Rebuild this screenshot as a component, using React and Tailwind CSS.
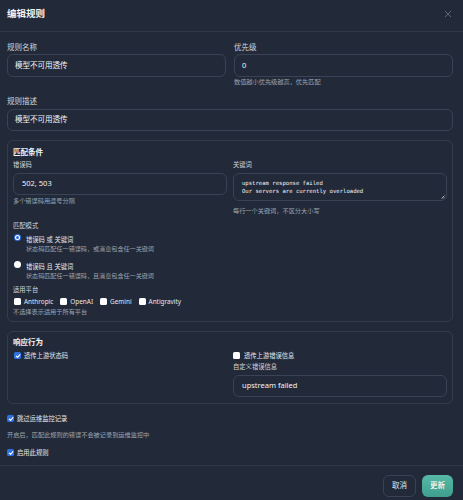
import React from "react";

const Check = ({ checked }) =>
  checked ? (
    <span className="w-[7px] h-[7px] rounded-[1.5px] bg-[#2f6fdf] flex items-center justify-center shrink-0">
      <svg width="6" height="6" viewBox="0 0 10 10">
        <path d="M2 5.2 L4.2 7.4 L8.2 2.6" stroke="white" strokeWidth="1.8" fill="none" strokeLinecap="round" strokeLinejoin="round" />
      </svg>
    </span>
  ) : (
    <span className="w-[7px] h-[7px] rounded-[1.5px] bg-white shrink-0" />
  );

const Radio = ({ checked }) =>
  checked ? (
    <span className="w-[7px] h-[7px] rounded-full bg-[#2f6fdf] flex items-center justify-center shrink-0">
      <span className="w-[5px] h-[5px] rounded-full bg-white flex items-center justify-center">
        <span className="w-[3px] h-[3px] rounded-full bg-[#2f6fdf]" />
      </span>
    </span>
  ) : (
    <span className="w-[7px] h-[7px] rounded-full bg-white shrink-0" />
  );

export default function App() {
  return (
    <div className="w-[463px] h-[500px] overflow-hidden bg-[#222a3a] text-[#e5e7eb] font-['Noto_Sans','Noto_Sans_CJK_SC',sans-serif]">
      {/* header */}
      <div className="flex items-start justify-between pl-[7px] pr-[11px] pt-[8px] pb-[11px] border-b border-[#2f3848]">
        <div className="text-[9.5px] leading-[12px] font-bold text-[#f3f4f6]">编辑规则</div>
        <svg width="8" height="8" viewBox="0 0 10 10" className="mt-[2px]">
          <path d="M1.5 1.5 L8.5 8.5 M8.5 1.5 L1.5 8.5" stroke="#6b7280" strokeWidth="1.1" strokeLinecap="round" />
        </svg>
      </div>

      {/* body */}
      <div className="pl-[7px] pr-[10px] pt-[10px] pb-[8px]">
        <div className="grid grid-cols-2 gap-x-[8px]">
          <div>
            <div className="text-[7.5px] leading-[10px] text-[#d1d5db]">规则名称</div>
            <div className="mt-[2px] h-[23px] rounded-[6px] border border-[#394355] flex items-center px-[7px] text-[7.5px] text-[#f3f4f6]">模型不可用透传</div>
          </div>
          <div>
            <div className="text-[7.5px] leading-[10px] text-[#d1d5db]">优先级</div>
            <div className="mt-[2px] h-[23px] rounded-[6px] border border-[#394355] flex items-center px-[7px] text-[7.5px] text-[#f3f4f6]">0</div>
            <div className="mt-[1px] text-[6.2px] leading-[8px] text-[#9ca3af]">数值越小优先级越高，优先匹配</div>
          </div>
        </div>

        <div className="mt-[10px] text-[7.5px] leading-[10px] text-[#d1d5db]">规则描述</div>
        <div className="mt-[3px] h-[22px] rounded-[6px] border border-[#394355] flex items-center px-[7px] text-[7.5px] text-[#f3f4f6]">模型不可用透传</div>

        {/* match conditions */}
        <div className="mt-[9px] rounded-[6px] border border-[#343d4e] px-[5px] pt-[6px] pb-[5px]">
          <div className="text-[7.5px] leading-[10px] font-bold text-[#f3f4f6]">匹配条件</div>
          <div className="mt-[4px] grid grid-cols-2 gap-x-[6px]">
            <div>
              <div className="text-[6.3px] leading-[8px] text-[#d1d5db]">错误码</div>
              <div className="mt-[4px] h-[22px] rounded-[6px] border border-[#394355] flex items-center px-[8px] text-[7.5px] text-[#f3f4f6]">502, 503</div>
              <div className="mt-[2px] text-[6.2px] leading-[8px] text-[#9ca3af]">多个错误码用逗号分隔</div>
            </div>
            <div>
              <div className="text-[6.3px] leading-[8px] text-[#d1d5db]">关键词</div>
              <div className="relative mt-[4px] h-[28px] rounded-[6px] border border-[#394355] px-[8px] pt-[5px] font-['DejaVu_Sans_Mono',monospace] text-[5.6px] leading-[8px] text-[#f3f4f6] whitespace-pre">
                <div>upstream response failed</div>
                <div>Our servers are currently overloaded</div>
                <svg width="4" height="4" viewBox="0 0 4 4" className="absolute right-[1px] bottom-[1px]">
                  <path d="M0.5 3.5 L3.5 0.5 M2 3.5 L3.5 2" stroke="#d1d5db" strokeWidth="0.7" />
                </svg>
              </div>
              <div className="mt-[6px] text-[6.2px] leading-[8px] text-[#9ca3af]">每行一个关键词，不区分大小写</div>
            </div>
          </div>

          <div className="mt-[7px] text-[6.3px] leading-[8px] text-[#d1d5db]">匹配模式</div>
          <div className="mt-[4px] flex items-start gap-[5px] pl-[1px]">
            <Radio checked />
            <div className="pt-[1px]">
              <div className="text-[6.3px] leading-[9px] text-[#e5e7eb]">错误码 或 关键词</div>
              <div className="text-[6.1px] leading-[9px] text-[#9ca3af]">状态码匹配任一错误码，或消息包含任一关键词</div>
            </div>
          </div>
          <div className="mt-[8px] flex items-start gap-[5px] pl-[1px]">
            <Radio />
            <div className="pt-[1px]">
              <div className="text-[6.3px] leading-[9px] text-[#e5e7eb]">错误码 且 关键词</div>
              <div className="text-[6.1px] leading-[9px] text-[#9ca3af]">状态码匹配任一错误码，且消息包含任一关键词</div>
            </div>
          </div>

          <div className="mt-[6px] text-[6.3px] leading-[8px] text-[#d1d5db]">适用平台</div>
          <div className="mt-[3px] flex items-center gap-[7px] pl-[1px]">
            {["Anthropic", "OpenAI", "Gemini", "Antigravity"].map((p) => (
              <div key={p} className="flex items-center gap-[3px]">
                <Check />
                <span className="text-[6.4px] leading-[9px] text-[#e5e7eb]">{p}</span>
              </div>
            ))}
          </div>
          <div className="mt-[2px] text-[6.2px] leading-[8px] text-[#9ca3af]">不选择表示适用于所有平台</div>
        </div>

        {/* response behaviour */}
        <div className="mt-[9px] rounded-[6px] border border-[#343d4e] px-[5px] pt-[5px] pb-[6px]">
          <div className="text-[7.5px] leading-[10px] font-bold text-[#f3f4f6]">响应行为</div>
          <div className="mt-[4px] grid grid-cols-2 gap-x-[6px]">
            <div className="flex items-center gap-[3px] h-[9px] pl-[1px] self-start">
              <Check checked />
              <span className="text-[6.3px] leading-[9px] text-[#e5e7eb]">透传上游状态码</span>
            </div>
            <div>
              <div className="flex items-center gap-[4px] h-[9px]">
                <Check />
                <span className="text-[6.3px] leading-[9px] text-[#e5e7eb]">透传上游错误信息</span>
              </div>
              <div className="mt-[3px] text-[6.3px] leading-[8px] text-[#d1d5db]">自定义错误信息</div>
              <div className="mt-[4px] h-[22px] rounded-[6px] border border-[#394355] flex items-center px-[8px] text-[7.5px] text-[#f3f4f6]">upstream failed</div>
            </div>
          </div>
        </div>

        <div className="mt-[10px] flex items-center gap-[3px] h-[9px]">
          <Check checked />
          <span className="text-[6.3px] leading-[9px] text-[#e5e7eb]">跳过运维监控记录</span>
        </div>
        <div className="mt-[8px] text-[6.2px] leading-[8px] text-[#9ca3af]">开启后，匹配此规则的错误不会被记录到运维监控中</div>
        <div className="mt-[9px] flex items-center gap-[3px] h-[9px]">
          <Check checked />
          <span className="text-[6.3px] leading-[9px] text-[#e5e7eb]">启用此规则</span>
        </div>
      </div>

      {/* footer */}
      <div className="border-t border-[#2f3848] pt-[9px] pr-[10px] flex justify-end gap-[6px]">
        <div className="w-[33px] h-[22px] rounded-[6px] border border-[#394355] flex items-center justify-center text-[7.5px] text-[#e5e7eb]">取消</div>
        <div className="w-[31px] h-[22px] rounded-[6px] bg-gradient-to-b from-[#58b9a7] to-[#3f9f8e] flex items-center justify-center text-[7.5px] font-medium text-white">更新</div>
      </div>
    </div>
  );
}
